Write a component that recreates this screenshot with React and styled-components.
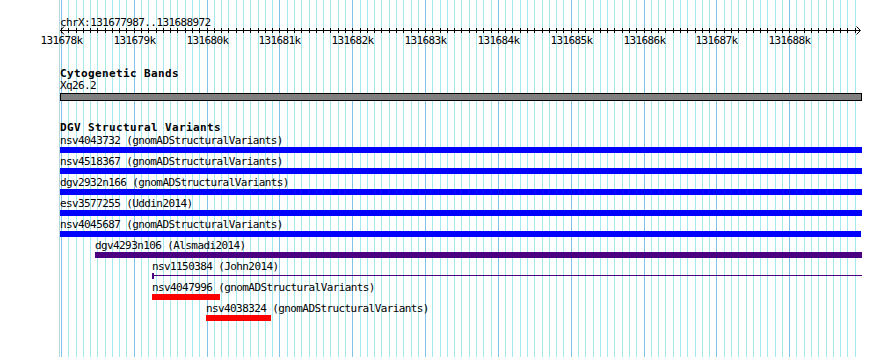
import React from "react";
import styled, { createGlobalStyle } from "styled-components";

const VIEW_START = 131677987;
const VIEW_END = 131688972;
const LEFT = 60;
const SPAN = 800;
const FIRST_TICK = 131678000;
const TICK_STEP = 100;
const TICK_COUNT = 110;

const bpToX = (bp) => LEFT + ((bp - VIEW_START) * SPAN) / (VIEW_END - VIEW_START);

const ticks = Array.from({ length: TICK_COUNT }, (_, k) => {
  const bp = FIRST_TICK + k * TICK_STEP;
  return { bp, x: Math.round(bpToX(bp)) + 0.5, major: k % 10 === 0 };
});

const cytoBands = { label: "Xq26.2", x: 0, w: 802 };

const variants = [
  { id: "nsv4043732", source: "gnomADStructuralVariants", x: 0, w: 802, color: "#0000ff" },
  { id: "nsv4518367", source: "gnomADStructuralVariants", x: 0, w: 802, color: "#0000ff" },
  { id: "dgv2932n166", source: "gnomADStructuralVariants", x: 0, w: 802, color: "#0000ff" },
  { id: "esv3577255", source: "Uddin2014", x: 0, w: 802, color: "#0000ff" },
  { id: "nsv4045687", source: "gnomADStructuralVariants", x: 0, w: 801, color: "#0000ff" },
  { id: "dgv4293n106", source: "Alsmadi2014", x: 35, w: 767, color: "#4b0082" },
  { id: "nsv1150384", source: "John2014", x: 92, w: 710, color: "#4b0082", line: true },
  { id: "nsv4047996", source: "gnomADStructuralVariants", x: 92, w: 68, color: "#ff0000" },
  { id: "nsv4038324", source: "gnomADStructuralVariants", x: 146, w: 65, color: "#ff0000" },
];

const GlobalStyle = createGlobalStyle`
  html, body {
    margin: 0;
    padding: 0;
    background: #ffffff;
  }
  body {
    font-family: "DejaVu Sans Mono", "Liberation Mono", monospace;
  }
`;

const Canvas = styled.div`
  position: relative;
  width: 890px;
  height: 357px;
  overflow: hidden;
  background: #ffffff;
  color: #000000;
`;

const GridLayer = styled.svg`
  position: absolute;
  left: 0;
  top: 0;
  z-index: 0;
`;

const Content = styled.div`
  position: relative;
  z-index: 1;
  display: flex;
  flex-direction: column;
`;

const RulerSvg = styled.svg`
  display: block;
`;

const RulerText = styled.text`
  font-family: "DejaVu Sans Mono", "Liberation Mono", monospace;
  font-size: 11px;
  letter-spacing: -0.6px;
  fill: #000000;
`;

const TrackList = styled.div`
  display: flex;
  flex-direction: column;
  padding-left: ${LEFT}px;
`;

const Track = styled.section`
  display: flex;
  flex-direction: column;
  margin-top: ${(p) => p.$gap}px;
`;

const TrackTitle = styled.h3`
  margin: 0;
  height: 13px;
  font-family: "DejaVu Sans Mono", "Liberation Mono", monospace;
  font-weight: bold;
  font-size: 11px;
  line-height: 13px;
  letter-spacing: 0.38px;
  white-space: nowrap;
`;

const Label = styled.div`
  height: ${(p) => p.$h}px;
  font-size: 11px;
  line-height: ${(p) => p.$h}px;
  letter-spacing: -0.6px;
  white-space: nowrap;
`;

const BandBar = styled.div`
  box-sizing: border-box;
  height: 8px;
  margin-top: 1px;
  border: 1px solid #000000;
  background: #808080;
`;

const Feature = styled.div`
  display: flex;
  flex-direction: column;
  align-items: flex-start;
  height: 21px;
`;

const Bar = styled.div`
  height: 6px;
  background: ${(p) => p.$color};
`;

const ThinBar = styled.div`
  box-sizing: border-box;
  height: 6px;
  border-left: 2px solid ${(p) => p.$color};
  background: linear-gradient(${(p) => p.$color}, ${(p) => p.$color}) 0 2px / 100% 1px no-repeat;
`;

const Grid = () => (
  <GridLayer width="890" height="357">
    <line x1="59.5" y1="0" x2="59.5" y2="357" stroke="#b7d7dc" />
    {ticks.map((t) => (
      <line
        key={t.bp}
        x1={t.x}
        y1="0"
        x2={t.x}
        y2="357"
        stroke={t.major ? "#82c3ea" : "#a4e9ef"}
      />
    ))}
  </GridLayer>
);

const Ruler = () => (
  <RulerSvg width="890" height="50">
    <RulerText x={LEFT} y="26">
      chrX:{VIEW_START}..{VIEW_END}
    </RulerText>
    <line x1={LEFT} y1="30.5" x2={LEFT + SPAN} y2="30.5" stroke="#000" />
    <polyline points="64,26.5 60.5,30.5 64,34.5" fill="none" stroke="#000" />
    <polyline
      points={`${LEFT + SPAN - 3.5},26.5 ${LEFT + SPAN + 0.5},30.5 ${LEFT + SPAN - 3.5},34.5`}
      fill="none"
      stroke="#000"
    />
    {ticks.map((t) => (
      <line key={t.bp} x1={t.x} y1="28" x2={t.x} y2="33" stroke="#000" />
    ))}
    {ticks
      .filter((t) => t.major)
      .map((t) => (
        <RulerText key={t.bp} x={t.x} y="44" textAnchor="middle">
          {t.bp / 1000}k
        </RulerText>
      ))}
  </RulerSvg>
);

const VariantRow = ({ v }) => (
  <Feature style={{ marginLeft: v.x }}>
    <Label $h={13}>
      {v.id} ({v.source})
    </Label>
    {v.line ? (
      <ThinBar $color={v.color} style={{ width: v.w }} />
    ) : (
      <Bar $color={v.color} style={{ width: v.w }} />
    )}
  </Feature>
);

export default function App() {
  return (
    <>
      <GlobalStyle />
      <Canvas>
        <Grid />
        <Content>
          <Ruler />
          <TrackList>
            <Track $gap={17}>
              <TrackTitle>Cytogenetic Bands</TrackTitle>
              <Label $h={12}>{cytoBands.label}</Label>
              <BandBar style={{ width: cytoBands.w }} />
            </Track>
            <Track $gap={20}>
              <TrackTitle>DGV Structural Variants</TrackTitle>
              {variants.map((v) => (
                <VariantRow key={v.id} v={v} />
              ))}
            </Track>
          </TrackList>
        </Content>
      </Canvas>
    </>
  );
}
